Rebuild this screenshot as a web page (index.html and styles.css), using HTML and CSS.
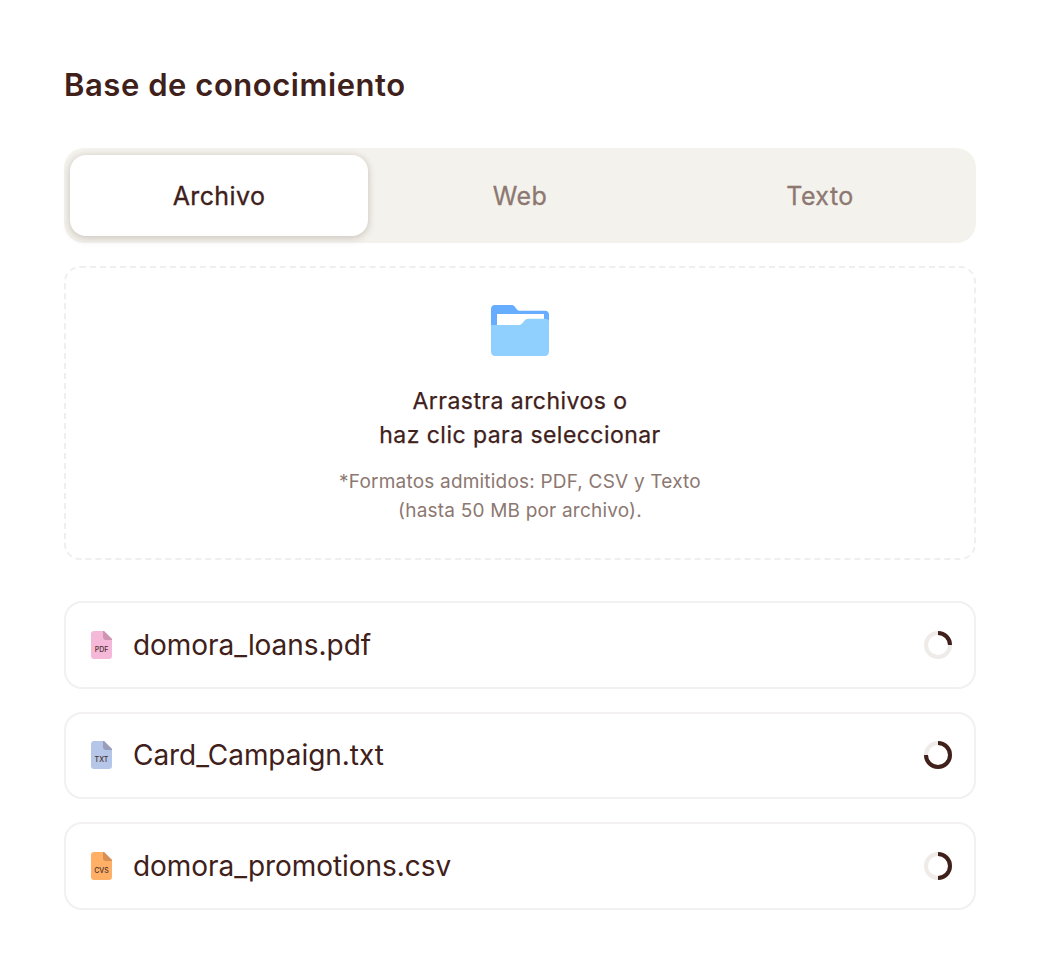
FILE: index.html
```html
<!DOCTYPE html>
<html lang="es">
<head>
    <meta charset="UTF-8">
    <title>Base de conocimiento</title>
    <link rel="stylesheet" href="styles.css">
</head>
<body>
    <div class="container">
        <h1 class="title">Base de conocimiento</h1>

        <div class="tabs">
            <div class="tab active">Archivo</div>
            <div class="tab">Web</div>
            <div class="tab">Texto</div>
        </div>

        <div class="dropzone">
            <svg class="folder-icon" width="58" height="51" viewBox="0 0 58 51">
                <path fill="#66adff" d="M4 0h16c2 0 3 .6 4 2l2 2.500c.6.800 1.200 1.200 2.500 1.200H54c2.400 0 4 1.600 4 4V30H0V4c0-2.400 1.600-4 4-4z"/>
                <rect fill="#ffffff" x="6" y="9" width="47" height="16"/>
                <path fill="#8fd0ff" d="M0 20h27c2.400 0 3.600-.7 4.800-2.300l1.500-2c1-1.300 2.300-2 4.200-2H54c2.400 0 4 1 4 2.500V46.500c0 2.700-1.600 4.500-4 4.500H4c-2.400 0-4-1.800-4-4.500z"/>
            </svg>
            <div class="drop-title">Arrastra archivos o<br>haz clic para seleccionar</div>
            <div class="drop-note">*Formatos admitidos: PDF, CSV y Texto<br>(hasta 50 MB por archivo).</div>
        </div>

        <div class="file-list">
            <div class="file-row">
                <svg class="file-icon" width="21" height="28" viewBox="0 0 21 28">
                    <path fill="#f5b8d8" d="M3 0h10l8 8v17c0 1.800-1.200 3-3 3H3c-1.800 0-3-1.200-3-3V3c0-1.800 1.200-3 3-3z"/>
                    <path fill="#cf94b2" d="M12 0h1l8 8v1h-6c-1.800 0-3-1.200-3-3z"/>
                    <text class="file-tag" x="10.500" y="20.500" text-anchor="middle">PDF</text>
                </svg>
                <span class="file-name">domora_loans.pdf</span>
                <svg class="spinner" width="28" height="28" viewBox="0 0 28 28">
                    <circle class="spinner-track" cx="14" cy="14" r="12"/>
                    <circle class="spinner-bar" cx="14" cy="14" r="12" pathLength="100" stroke-dasharray="25 100"/>
                </svg>
            </div>
            <div class="file-row">
                <svg class="file-icon" width="21" height="28" viewBox="0 0 21 28">
                    <path fill="#b5c6e8" d="M3 0h10l8 8v17c0 1.800-1.200 3-3 3H3c-1.800 0-3-1.200-3-3V3c0-1.800 1.200-3 3-3z"/>
                    <path fill="#9a9dba" d="M12 0h1l8 8v1h-6c-1.800 0-3-1.200-3-3z"/>
                    <text class="file-tag" x="10.500" y="20.500" text-anchor="middle">TXT</text>
                </svg>
                <span class="file-name">Card_Campaign.txt</span>
                <svg class="spinner" width="28" height="28" viewBox="0 0 28 28">
                    <circle class="spinner-track" cx="14" cy="14" r="12"/>
                    <circle class="spinner-bar" cx="14" cy="14" r="12" pathLength="100" stroke-dasharray="75 100"/>
                </svg>
            </div>
            <div class="file-row">
                <svg class="file-icon" width="21" height="28" viewBox="0 0 21 28">
                    <path fill="#ffb066" d="M3 0h10l8 8v17c0 1.800-1.200 3-3 3H3c-1.800 0-3-1.200-3-3V3c0-1.800 1.200-3 3-3z"/>
                    <path fill="#d68f55" d="M12 0h1l8 8v1h-6c-1.800 0-3-1.200-3-3z"/>
                    <text class="file-tag" x="10.500" y="20.500" text-anchor="middle">CVS</text>
                </svg>
                <span class="file-name">domora_promotions.csv</span>
                <svg class="spinner" width="28" height="28" viewBox="0 0 28 28">
                    <circle class="spinner-track" cx="14" cy="14" r="12"/>
                    <circle class="spinner-bar" cx="14" cy="14" r="12" pathLength="100" stroke-dasharray="50 100"/>
                </svg>
            </div>
        </div>
    </div>
</body>
</html>
```

FILE: styles.css
```css
body {
    font-family: "Inter", "Liberation Sans", sans-serif;
    margin: 0;
    background-color: #ffffff;
    color: #40201a;
}
.container {
    width: 912px;
    padding: 65px 64px 0;
}
.title {
    margin: 0 0 43px;
    font-size: 31px;
    line-height: 40px;
    font-weight: 600;
    letter-spacing: 0.55px;
}
.tabs {
    display: grid;
    grid-template-columns: repeat(3, 1fr);
    height: 95px;
    box-sizing: border-box;
    padding: 6px;
    background: #f4f2ed;
    border-radius: 20px;
    margin-bottom: 23px;
}
.tab {
    display: flex;
    align-items: center;
    justify-content: center;
    font-size: 25px;
    letter-spacing: 0.4px;
    -webkit-text-stroke: 0.3px;
    color: #8c7871;
    border-radius: 16px;
}
.tab.active {
    margin: 1px 2px 1px 0;
    background: #ffffff;
    color: #40201a;
    box-shadow: 0 3px 8px rgba(90, 70, 50, 0.16), 0 0 6px rgba(90, 70, 50, 0.14);
}
.dropzone {
    height: 294px;
    box-sizing: border-box;
    border: 2px dashed #f1efed;
    border-radius: 16px;
    padding-top: 37px;
    display: flex;
    flex-direction: column;
    align-items: center;
    text-align: center;
    margin-bottom: 41px;
}
.folder-icon {
    margin-bottom: 28px;
}
.drop-title {
    font-size: 23px;
    line-height: 34px;
    letter-spacing: 0.45px;
    -webkit-text-stroke: 0.25px;
    margin-bottom: 15px;
}
.drop-note {
    font-size: 19px;
    line-height: 29px;
    letter-spacing: 0.2px;
    color: #8c7871;
}
.file-list {
    display: flex;
    flex-direction: column;
    gap: 23px;
}
.file-row {
    display: flex;
    align-items: center;
    height: 87.5px;
    box-sizing: border-box;
    border: 2px solid #f2f0f0;
    border-radius: 18px;
    padding: 0 22px 0 25px;
}
.file-icon {
    flex: none;
    margin-right: 21px;
}
.file-tag {
    font-size: 7px;
    font-weight: 500;
    fill: #4a2f2c;
}
.file-name {
    flex: 1;
    font-size: 28px;
    letter-spacing: -0.05px;
}
.spinner {
    flex: none;
}
.spinner circle {
    fill: none;
    stroke-width: 4;
}
.spinner-track {
    stroke: #eeebe9;
}
.spinner-bar {
    stroke: #40201a;
    transform: rotate(-90deg);
    transform-origin: 14px 14px;
}
```
